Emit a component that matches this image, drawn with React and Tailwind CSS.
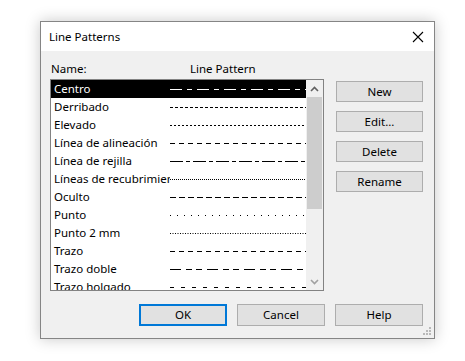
import React from "react";

const patterns = [
  { name: "Centro", dash: "12 5 5 5" },
  { name: "Derribado", dash: "3 2" },
  { name: "Elevado", dash: "2 2" },
  { name: "Línea de alineación", dash: "5 4" },
  { name: "Línea de rejilla", dash: "13 3 4 3" },
  { name: "Líneas de recubrimiento", dash: "1 1" },
  { name: "Oculto", dash: "6 3" },
  { name: "Punto", dash: "1 6" },
  { name: "Punto 2 mm", dash: "1 1.5" },
  { name: "Trazo", dash: "5 4" },
  { name: "Trazo doble", dash: "11 5 6 4 6 5" },
  { name: "Trazo holgado", dash: "4 7" },
];

const Btn = ({ children, primary }) => (
  <button
    className={
      primary
        ? "h-[22px] w-[88px] border-2 border-[#0078d7] bg-[#e1e1e1] text-[11.5px] text-black"
        : "h-[22px] w-[88px] border border-[#adadad] bg-[#e1e1e1] text-[11.5px] text-black"
    }
  >
    {children}
  </button>
);

const SideBtn = ({ children }) => (
  <button className="h-[21px] w-[87px] border border-[#adadad] bg-[#e1e1e1] text-[11.5px] text-black">
    {children}
  </button>
);

const LineRow = ({ item, selected }) => (
  <div
    className={
      selected
        ? "flex h-[18px] items-center bg-black text-white"
        : "flex h-[18px] items-center text-black"
    }
  >
    <div className="w-[119px] shrink-0 overflow-hidden whitespace-nowrap pl-[3px] text-[11.5px] leading-[18px]">
      {item.name}
    </div>
    <svg width="140" height="18" className="shrink-0">
      <line
        x1="0"
        y1="9.5"
        x2="140"
        y2="9.5"
        stroke={selected ? "#fff" : "#000"}
        strokeWidth="1"
        strokeDasharray={item.dash}
      />
    </svg>
  </div>
);

const App = () => {
  return (
    <div
      className="h-[361px] w-[465px] overflow-hidden bg-white pl-[40px] pt-[21px]"
      style={{ fontFamily: '"Noto Sans", "Open Sans", sans-serif' }}
    >
      <div className="flex h-[318px] w-[395px] flex-col border border-[#858585] bg-[#f0f0f0] shadow-[0_0_14px_rgba(0,0,0,0.22)]">
        {/* title bar */}
        <div className="flex h-[29px] shrink-0 items-center justify-between bg-white pl-[8px] pr-[10px]">
          <span className="text-[11.5px] text-black">Line Patterns</span>
          <svg width="12" height="12" viewBox="0 0 12 12">
            <path d="M1 1 L11 11 M11 1 L1 11" stroke="#000" strokeWidth="1.1" />
          </svg>
        </div>

        {/* body */}
        <div className="flex flex-1 flex-col pl-[9px] pr-[11px]">
          <div className="flex gap-[12px]">
            <div className="flex flex-col pt-[10px]">
              <div className="flex h-[16px] items-center text-[11.5px] leading-[16px] text-black">
                <span className="w-[140px] pl-[1px]">Name:</span>
                <span>Line Pattern</span>
              </div>
              <div className="mt-[2px] flex h-[212px] w-[274px] border border-[#828282] bg-white">
                <div className="flex-1 overflow-hidden">
                  {patterns.map((p, i) => (
                    <LineRow key={i} item={p} selected={i === 0} />
                  ))}
                </div>
                {/* scrollbar */}
                <div className="flex w-[17px] shrink-0 flex-col bg-[#f0f0f0]">
                  <div className="flex h-[17px] items-center justify-center">
                    <svg width="9" height="6" viewBox="0 0 9 6">
                      <path d="M1 5 L4.5 1.5 L8 5" fill="none" stroke="#606060" strokeWidth="1.6" />
                    </svg>
                  </div>
                  <div className="mx-[1px] h-[112px] bg-[#cdcdcd]" />
                  <div className="flex-1" />
                  <div className="flex h-[17px] items-center justify-center">
                    <svg width="9" height="6" viewBox="0 0 9 6">
                      <path d="M1 1 L4.5 4.5 L8 1" fill="none" stroke="#a0a0a0" strokeWidth="1.6" />
                    </svg>
                  </div>
                </div>
              </div>
            </div>
            <div className="flex flex-col gap-[9px] pt-[30px]">
              <SideBtn>New</SideBtn>
              <SideBtn>Edit...</SideBtn>
              <SideBtn>Delete</SideBtn>
              <SideBtn>Rename</SideBtn>
            </div>
          </div>

          <div className="mt-[13px] flex justify-end gap-[10px]">
            <Btn primary>OK</Btn>
            <Btn>Cancel</Btn>
            <Btn>Help</Btn>
          </div>
          <div className="flex flex-1 items-end justify-end pb-[2px]">
            <svg width="10" height="10" viewBox="0 0 10 10" className="mr-[-9px]">
              <rect x="7" y="1" width="2" height="2" fill="#b8b8b8" />
              <rect x="4" y="4" width="2" height="2" fill="#b8b8b8" />
              <rect x="7" y="4" width="2" height="2" fill="#b8b8b8" />
              <rect x="1" y="7" width="2" height="2" fill="#b8b8b8" />
              <rect x="4" y="7" width="2" height="2" fill="#b8b8b8" />
              <rect x="7" y="7" width="2" height="2" fill="#b8b8b8" />
            </svg>
          </div>
        </div>
      </div>
    </div>
  );
};

export default App;
